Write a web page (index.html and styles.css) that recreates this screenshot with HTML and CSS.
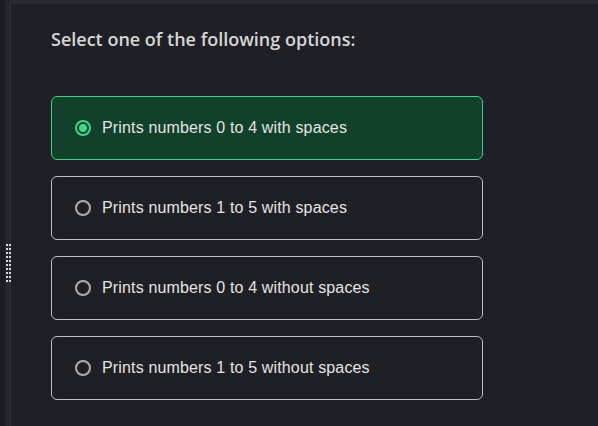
FILE: index.html
```html
<!DOCTYPE html>
<html>
<head>
<meta charset="utf-8">
<link rel="stylesheet" href="styles.css">
</head>
<body>
<div class="app">
  <div class="rail">
    <div class="grip">
      <span></span><span></span><span></span><span></span><span></span>
      <span></span><span></span><span></span><span></span><span></span>
      <span></span><span></span><span></span><span></span><span></span>
      <span></span><span></span><span></span><span></span><span></span>
    </div>
  </div>
  <div class="main">
    <div class="topbar"></div>
    <div class="content">
      <h2 class="title">Select one of the following options:</h2>
      <div class="options">
        <label class="option selected"><span class="radio"></span><span class="label">Prints numbers 0 to 4 with spaces</span></label>
        <label class="option"><span class="radio"></span><span class="label">Prints numbers 1 to 5 with spaces</span></label>
        <label class="option"><span class="radio"></span><span class="label">Prints numbers 0 to 4 without spaces</span></label>
        <label class="option"><span class="radio"></span><span class="label">Prints numbers 1 to 5 without spaces</span></label>
      </div>
    </div>
  </div>
</div>
</body>
</html>
```

FILE: styles.css
```css
html, body {
  margin: 0;
  padding: 0;
  background: #1f2025;
  height: 100%;
  overflow: hidden;
}
.app {
  display: flex;
  height: 426px;
}
.rail {
  width: 5px;
  border-right: 1px solid #2a3142;
  padding-right: 5px;
  box-sizing: content-box;
  position: relative;
  background: linear-gradient(to right, #1c1d22 0 5px, #25272d 5px);
}
.grip {
  position: absolute;
  left: 6px;
  top: 244px;
  display: grid;
  grid-template-columns: 2px 2px;
  column-gap: 1px;
  row-gap: 2px;
}
.grip span {
  width: 2px;
  height: 2px;
  background: #d8d8d8;
}
.main {
  flex: 1;
  display: flex;
  flex-direction: column;
}
.topbar {
  height: 4px;
  background: #2a2b30;
}
.content {
  padding: 0 0 0 40px;
}
.title {
  margin: 22px 0 0 0;
  font-family: "Open Sans", sans-serif;
  font-weight: 600;
  font-size: 18px;
  line-height: 26px;
  color: #d6d6d6;
}
.options {
  margin-top: 44px;
  display: flex;
  flex-direction: column;
  gap: 16px;
  width: 432px;
}
.option {
  box-sizing: border-box;
  height: 64px;
  border: 1px solid #b9c0c8;
  border-radius: 6px;
  display: flex;
  align-items: center;
  padding: 0 0 0 23px;
  font-family: "Liberation Sans", Arial, sans-serif;
  font-size: 16px;
  letter-spacing: 0.15px;
  color: #e4e4e4;
}
.option.selected {
  border-color: #40d083;
  background: #11412a;
}
.radio {
  box-sizing: border-box;
  width: 16px;
  height: 16px;
  border: 2px solid #b0b0b0;
  border-radius: 50%;
  margin-right: 11px;
  flex: none;
  position: relative;
}
.option.selected .radio {
  border-color: #44d386;
}
.option.selected .radio::after {
  content: "";
  position: absolute;
  left: 2px;
  top: 2px;
  width: 8px;
  height: 8px;
  border-radius: 50%;
  background: #44d386;
}
```
